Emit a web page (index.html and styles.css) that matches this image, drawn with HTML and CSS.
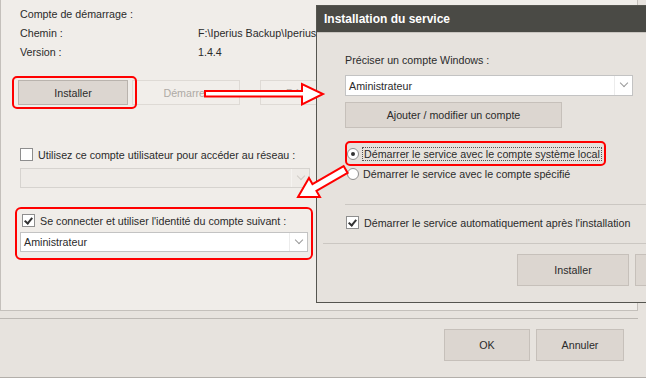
FILE: index.html
```html
<!DOCTYPE html>
<html lang="fr">
<head>
    <meta charset="UTF-8">
    <title>Installation du service</title>
    <link rel="stylesheet" href="styles.css">
</head>
<body>
    <div class="window">
        <div class="panel">
            <div class="info">
                <span class="info-label">Compte de démarrage :</span><span></span>
                <span class="info-label">Chemin :</span><span class="info-value">F:\Iperius Backup\Iperius</span>
                <span class="info-label">Version :</span><span class="info-value">1.4.4</span>
            </div>

            <div class="actions">
                <button class="btn btn-wide">Installer</button>
                <button class="btn btn-disabled">Démarrer</button>
                <button class="btn btn-disabled btn-far">Désinstaller</button>
            </div>

            <div class="check-row">
                <span class="checkbox"></span>
                <span>Utilisez ce compte utilisateur pour accéder au réseau :</span>
            </div>
            <div class="combo combo-disabled combo-net"><span></span><span class="chevron"></span></div>

            <div class="check-row check-row-indent">
                <span class="checkbox is-checked"></span>
                <span>Se connecter et utiliser l'identité du compte suivant :</span>
            </div>
            <div class="combo combo-user"><span>Aministrateur</span><span class="chevron"></span></div>
        </div>

        <div class="footer">
            <button class="btn btn-ok">OK</button>
            <button class="btn btn-cancel">Annuler</button>
        </div>
    </div>

    <!-- floating dialog over the main window -->
    <div class="dialog">
        <div class="dialog-title">Installation du service</div>
        <div class="dialog-body">
            <p class="dialog-label">Préciser un compte Windows :</p>
            <div class="combo combo-dialog"><span>Aministrateur</span><span class="chevron"></span></div>
            <button class="btn btn-account">Ajouter / modifier un compte</button>

            <div class="radio-row radio-first">
                <span class="radio is-on"></span>
                <span class="focus-text">Démarrer le service avec le compte système local</span>
            </div>
            <div class="radio-row">
                <span class="radio"></span>
                <span>Démarrer le service avec le compte spécifié</span>
            </div>

            <div class="sep"></div>

            <div class="check-row check-auto">
                <span class="checkbox is-checked"></span>
                <span>Démarrer le service automatiquement après l'installation</span>
            </div>

            <div class="sep sep-wide"></div>

            <div class="dialog-actions">
                <button class="btn btn-dlg">Installer</button>
                <button class="btn btn-dlg"></button>
            </div>
        </div>
    </div>

    <!-- red annotations -->
    <div class="mark mark-install"></div>
    <div class="mark mark-radio"></div>
    <div class="mark mark-identity"></div>

    <svg class="arrows" width="646" height="378" viewBox="0 0 646 378">
        <polygon points="205,91 302,91 302,84 323,94 302,104.5 302,96.5 205,96.5"
                 fill="#fff" stroke="#f00" stroke-width="2" stroke-linejoin="miter"/>
        <g transform="translate(298 197) rotate(-30)">
            <polygon points="0,0 19,-11 19,-4 55,-4 55,4 19,4 19,11"
                     fill="#fff" stroke="#f00" stroke-width="2"/>
        </g>
    </svg>
</body>
</html>
```

FILE: styles.css
```css
:root {
    --window-bg: #e7e3de;
    --panel-bg: #f0ede9;
    --dialog-bg: #e6e2dd;
    --title-bg: #4a4a45;
    --text: #2b2b2b;
    --muted: #aeaaa5;
    --btn-bg: #dcd6d0;
    --btn-border: #c6c0ba;
    --line: #cbc7c2;
    --red: #ff0000;
}

* {
    box-sizing: border-box;
}

body {
    margin: 0;
    width: 646px;
    height: 378px;
    overflow: hidden;
    position: relative;
    background-color: var(--window-bg);
    font-family: 'Liberation Sans', Arial, sans-serif;
    font-size: 10.7px;
    color: var(--text);
}

button {
    font-family: inherit;
    font-size: 10.7px;
    color: var(--text);
    padding: 0;
}

.window {
    height: 378px;
    border-bottom: 1px solid #b3afaa;
}

.panel {
    width: 638px;
    height: 311px;
    background-color: var(--panel-bg);
    border: 1px solid #c4c0bb;
    border-top: none;
    padding-left: 17px;
}

.info {
    display: grid;
    grid-template-columns: 178px auto;
    padding: 5px 0 0 2px;
    line-height: 19px;
}

.info-value {
    white-space: nowrap;
    overflow: hidden;
}

.actions {
    display: flex;
    gap: 4px;
    margin-top: 18px;
}

.btn {
    flex: none;
    height: 25px;
    width: 108px;
    background-color: var(--btn-bg);
    border: 1px solid var(--btn-border);
}

.btn-wide {
    width: 110px;
    border-color: #b9b3ad;
}

.btn-disabled {
    background-color: #f1eeea;
    border-color: #dedad5;
    color: var(--muted);
}

.btn-far {
    margin-left: 16px;
}

.check-row {
    display: flex;
    align-items: center;
    gap: 5px;
    height: 19px;
    margin-top: 40px;
    padding-left: 2px;
}

.check-row-indent {
    margin-top: 23px;
    padding-left: 4px;
}

.checkbox {
    width: 13px;
    height: 13px;
    background: #fff;
    border: 1px solid #8e8e8e;
    position: relative;
    flex: none;
}

.checkbox.is-checked::after {
    content: "";
    position: absolute;
    left: 3px;
    top: 1px;
    width: 3px;
    height: 6px;
    border: solid #333;
    border-width: 0 2px 2px 0;
    transform: rotate(40deg);
}

.combo {
    display: flex;
    align-items: center;
    justify-content: space-between;
    height: 20px;
    background: #fff;
    border: 1px solid #c3c3c3;
    padding-left: 3px;
}

.combo-net {
    width: 290px;
    margin: 4px 0 0 2px;
}

.combo-disabled {
    background: #eeebe7;
    border-color: #d6d3cf;
}

.combo-user {
    width: 288px;
    margin: 2px 0 0 2px;
}

.chevron {
    width: 18px;
    height: 100%;
    border-left: 1px solid #ececec;
    position: relative;
}

.combo-disabled .chevron {
    border-left-color: #f5f3f0;
}

.chevron::after {
    content: "";
    position: absolute;
    left: 6px;
    top: 4px;
    width: 5px;
    height: 5px;
    border: solid #9a9a9a;
    border-width: 0 1px 1px 0;
    transform: rotate(45deg);
}

.combo-disabled .chevron::after {
    border-color: #cfcbc6;
}

.footer {
    display: flex;
    justify-content: flex-end;
    gap: 6px;
    width: 638px;
    margin-top: 7px;
    border-top: 1px solid #bcb8b3;
    padding: 10px 14px 0 0;
}

.btn-ok,
.btn-cancel {
    height: 32px;
    width: 86px;
}

.btn-cancel {
    width: 88px;
}

/* dialog */

.dialog {
    position: absolute;
    left: 316px;
    top: 5px;
    width: 330px;
    height: 298px;
    overflow: hidden;
    background-color: var(--dialog-bg);
    border: 1px solid #55554f;
    border-right: none;
}

.dialog-title {
    height: 27px;
    line-height: 26px;
    padding-left: 7px;
    background-color: var(--title-bg);
    border-bottom: 1px solid #c9c5c0;
    color: #fff;
    font-weight: bold;
    font-size: 12px;
}

.dialog-body {
    padding-left: 28px;
}

.dialog-label {
    margin: 19px 0 0;
    line-height: 16px;
}

.combo-dialog {
    width: 288px;
    height: 21px;
    margin-top: 7px;
}

.btn-account {
    display: block;
    width: 217px;
    height: 26px;
    margin-top: 6px;
}

.radio-row {
    display: flex;
    align-items: center;
    gap: 4px;
    height: 20px;
    padding-left: 2px;
}

.radio-first {
    margin-top: 16px;
}

.radio {
    width: 12px;
    height: 12px;
    border-radius: 50%;
    background: #fff;
    border: 1px solid #8e8e8e;
    position: relative;
    flex: none;
}

.radio.is-on::after {
    content: "";
    position: absolute;
    left: 3px;
    top: 3px;
    width: 4px;
    height: 4px;
    border-radius: 50%;
    background: #333;
}

.focus-text {
    outline: 1px dotted #555;
    padding: 0 1px;
}

.sep {
    height: 0;
    border-top: 1px solid var(--line);
    margin-top: 20px;
}

.sep-wide {
    margin: 11px 0 0 -22px;
}

.check-auto {
    margin-top: 8px;
    padding-left: 1px;
}

.dialog-actions {
    display: flex;
    gap: 6px;
    margin: 10px 0 0 172px;
}

.btn-dlg {
    width: 112px;
    height: 32px;
}

/* annotations */

.mark {
    position: absolute;
    border: 2px solid var(--red);
    border-radius: 5px;
}

.mark-install {
    left: 12px;
    top: 76px;
    width: 125px;
    height: 33px;
}

.mark-radio {
    left: 345px;
    top: 141px;
    width: 261px;
    height: 25px;
}

.mark-identity {
    left: 15px;
    top: 207px;
    width: 298px;
    height: 53px;
    border-radius: 6px;
}

.arrows {
    position: absolute;
    left: 0;
    top: 0;
    pointer-events: none;
}
```
